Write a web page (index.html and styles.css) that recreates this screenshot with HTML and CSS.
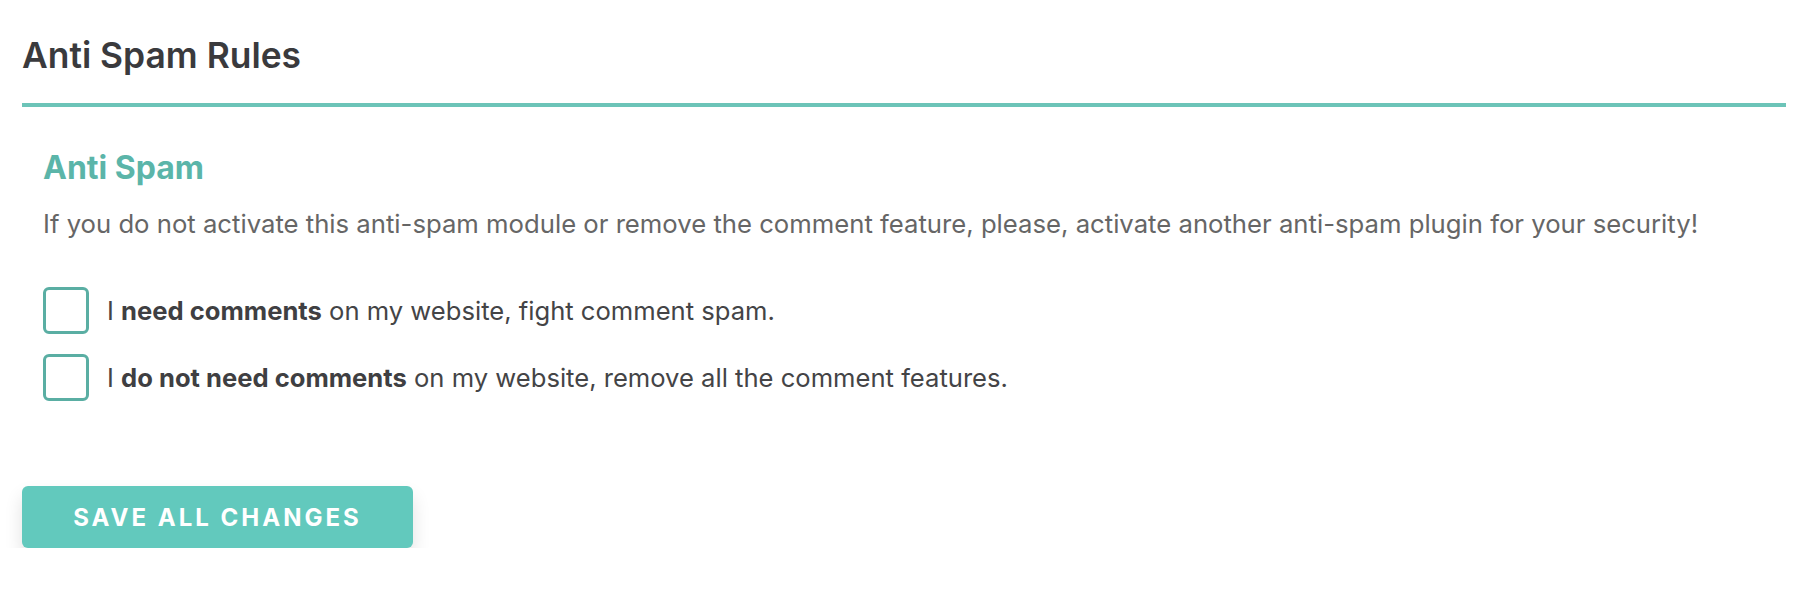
FILE: index.html
```html
<!DOCTYPE html>
<html lang="en">
<head>
<meta charset="utf-8">
<title>Anti Spam Rules</title>
<link rel="stylesheet" href="styles.css">
</head>
<body>
<div class="page">
  <header class="page-header">
    <h1 class="page-title">Anti Spam Rules</h1>
  </header>
  <section class="section">
    <h2 class="section-title">Anti Spam</h2>
    <p class="section-desc">If you do not activate this anti-spam module or remove the comment feature, please, activate another anti-spam plugin for your security!</p>
    <div class="options">
      <label class="option">
        <input type="checkbox" class="checkbox">
        <span class="option-text">I <strong>need comments</strong> on my website, fight comment spam.</span>
      </label>
      <label class="option">
        <input type="checkbox" class="checkbox">
        <span class="option-text">I <strong>do not need comments</strong> on my website, remove all the comment features.</span>
      </label>
    </div>
  </section>
  <button class="save-btn" type="button">Save all changes</button>
</div>
</body>
</html>
```
FILE: styles.css
```css
* { box-sizing: border-box; }
html, body { margin: 0; padding: 0; background: #ffffff; }
body { font-family: Inter, "Noto Sans", "Liberation Sans", sans-serif; }

.page {
  padding: 0 28px 0 22px;
}

.page-header {
  padding-top: 36px;
  padding-bottom: 27px;
  border-bottom: 4px solid #6cc4b8;
}

.page-title {
  margin: 0;
  font-size: 35.4px;
  line-height: 40px;
  font-weight: 600;
  color: #3a3a3d;
}

.section {
  padding-left: 21px;
}

.section-title {
  margin: 43px 0 0;
  font-size: 32px;
  line-height: 36px;
  font-weight: 700;
  color: #5bb5a9;
}

.section-desc {
  margin: 22px 0 0;
  font-size: 25.7px;
  line-height: 32px;
  color: #666666;
}

.options {
  margin-top: 47px;
  display: flex;
  flex-direction: column;
  gap: 20px;
}

.option {
  display: flex;
  align-items: center;
  gap: 18px;
  height: 47px;
}

.checkbox {
  appearance: none;
  -webkit-appearance: none;
  margin: 0;
  width: 46px;
  height: 47px;
  border: 3px solid #5aaea3;
  border-radius: 6px;
  background: #fff;
}

.option-text {
  font-size: 25.6px;
  line-height: 47px;
  color: #444446;
}

.option-text strong {
  font-weight: 700;
  color: #3f3f42;
}

.save-btn {
  margin-top: 85px;
  width: 391px;
  height: 62px;
  border: none;
  border-radius: 6px;
  background: #62c9bd;
  color: #ffffff;
  font-family: Inter, "Noto Sans", "Liberation Sans", sans-serif;
  font-size: 24px;
  font-weight: 700;
  letter-spacing: 3px;
  text-transform: uppercase;
  box-shadow: 0 10px 18px rgba(0, 0, 0, 0.12);
  display: block;
}
```
